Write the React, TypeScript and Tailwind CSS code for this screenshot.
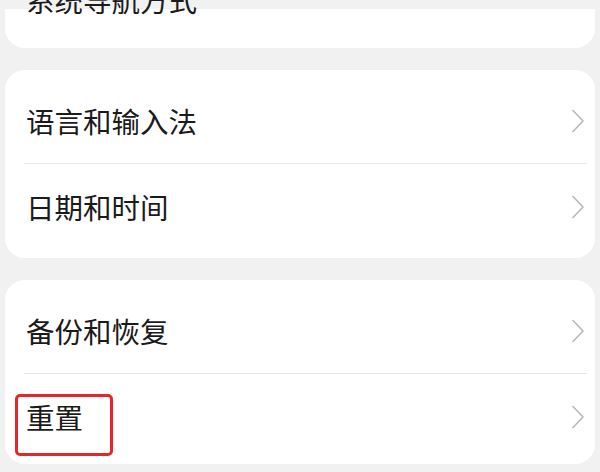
import { ReactNode } from "react";

const FONT = '"Noto Sans CJK SC", "Noto Sans", sans-serif';

function Chevron() {
  return (
    <svg width="14" height="24" viewBox="0 0 14 24" fill="none" className="shrink-0">
      <path d="M2 1.5 L12 12 L2 22.5" stroke="#b8b8b8" strokeWidth="1.6" strokeLinecap="round" strokeLinejoin="round" />
    </svg>
  );
}

function Row({ label, divider, children }: { label: string; divider?: boolean; children?: ReactNode }) {
  return (
    <div className="relative flex h-[86px] items-center pl-[21px] pr-[10px]">
      <span className="flex-1 text-[28.5px] leading-[28px] text-[#1b1b1b]">{label}</span>
      <Chevron />
      {divider ? <div className="absolute right-[8px] bottom-0 left-[19px] h-px bg-[#e6e6e6]" /> : null}
      {children}
    </div>
  );
}

function Card({ children, tight }: { children: ReactNode; tight?: boolean }) {
  return (
    <div className={`mx-[5px] rounded-[20px] bg-white pt-[8px] ${tight ? "pb-[4px]" : "pb-[8px]"}`}>{children}</div>
  );
}

export default function App() {
  return (
    <div className="flow-root h-[472px] w-[600px] overflow-hidden bg-[#f1f1f2]" style={{ fontFamily: FONT }}>
      <div className="mx-[5px] mt-[9px] flow-root h-[39px] rounded-b-[20px] bg-white pl-[21px]">
        <div className="-mt-[23px] text-[28.5px] leading-[28px] text-[#1b1b1b]">系统导航方式</div>
      </div>
      <div className="mt-[22px] flex flex-col gap-[22px]">
        <Card>
          <Row label="语言和输入法" divider />
          <Row label="日期和时间" />
        </Card>
        <Card tight>
          <Row label="备份和恢复" divider />
          <Row label="重置">
            <div className="absolute top-[20px] left-[10px] h-[62px] w-[98px] rounded-[5px] border-[3px] border-[#e8262a]" />
          </Row>
        </Card>
      </div>
    </div>
  );
}
